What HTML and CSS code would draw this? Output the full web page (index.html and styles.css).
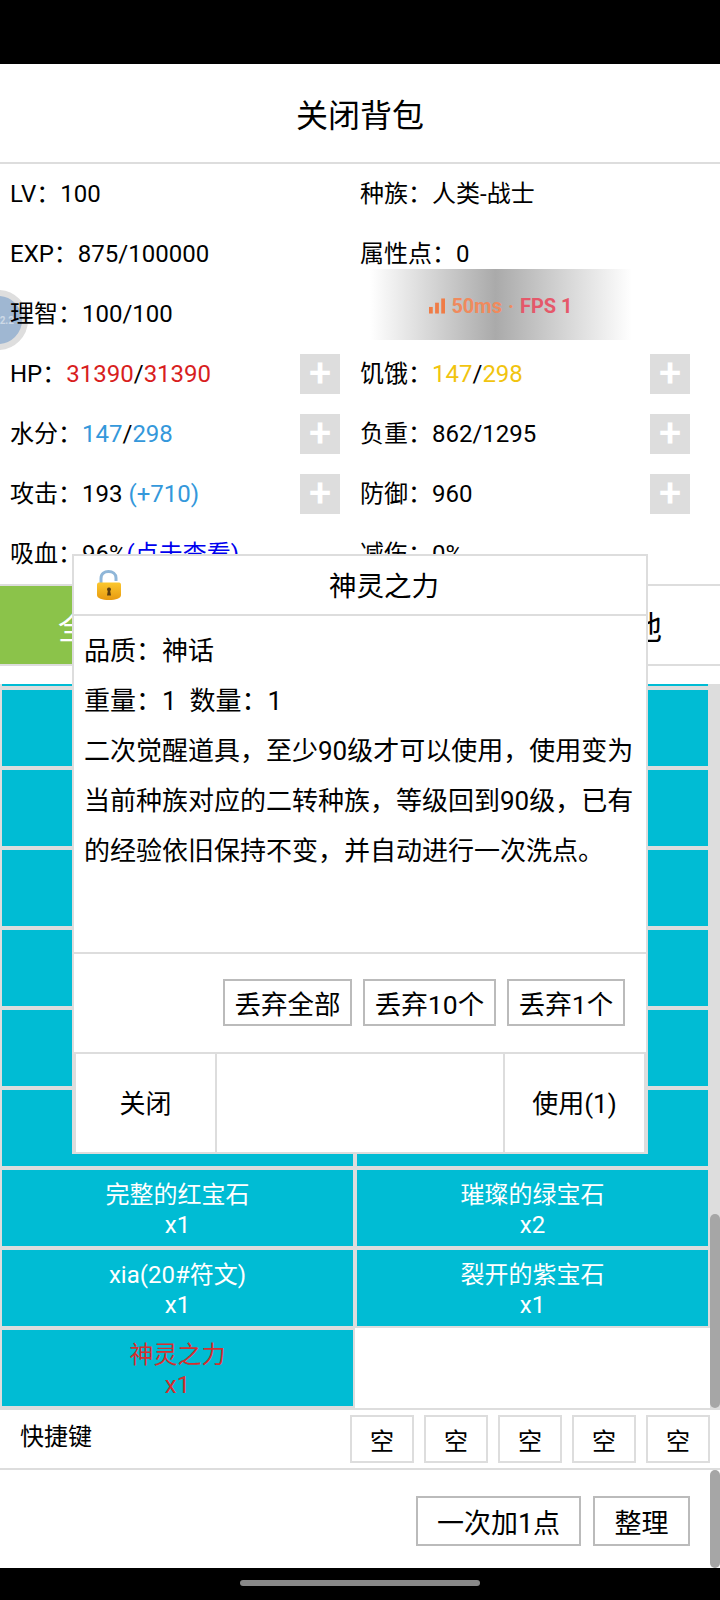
FILE: index.html
```html
<!DOCTYPE html>
<html lang="zh-CN">
<head>
<meta charset="utf-8">
<title>关闭背包</title>
<link rel="stylesheet" href="styles.css">
</head>
<body>
<div class="status-bar"></div>
<div class="float-ball"><span>2.2</span></div>
<main class="app">
  <header class="title">关闭背包</header>
  <section class="stats">
    <div class="stat"><span>LV&#xFF1A;100</span></div>
    <div class="stat"><span>种族&#xFF1A;人类-战士</span></div>
    <div class="stat"><span>EXP&#xFF1A;875/100000</span></div>
    <div class="stat"><span>属性点&#xFF1A;0</span></div>
    <div class="stat"><span>理智&#xFF1A;100/100</span></div>
    <div class="stat"></div>
    <div class="stat"><span>HP&#xFF1A;<i class="red">31390</i>/<i class="red">31390</i></span><b class="plus">+</b></div>
    <div class="stat"><span>饥饿&#xFF1A;<i class="yellow">147</i>/<i class="yellow">298</i></span><b class="plus">+</b></div>
    <div class="stat"><span>水分&#xFF1A;<i class="blue">147</i>/<i class="blue">298</i></span><b class="plus">+</b></div>
    <div class="stat"><span>负重&#xFF1A;862/1295</span><b class="plus">+</b></div>
    <div class="stat"><span>攻击&#xFF1A;193 <i class="blue">(+710)</i></span><b class="plus">+</b></div>
    <div class="stat"><span>防御&#xFF1A;960</span><b class="plus">+</b></div>
    <div class="stat"><span>吸血&#xFF1A;96%<a class="link">(点击查看)</a></span></div>
    <div class="stat"><span>减伤&#xFF1A;0%</span></div>
  </section>
  <nav class="tabs">
    <div class="tab active">全部</div>
    <div class="tab">装备</div>
    <div class="tab">材料</div>
    <div class="tab">其他</div>
  </nav>
  <section class="list-wrap">
    <div class="list">
      <div class="cell sliver"></div><div class="cell sliver"></div>
      <div class="cell"></div><div class="cell"></div>
      <div class="cell"></div><div class="cell"></div>
      <div class="cell"></div><div class="cell"></div>
      <div class="cell"></div><div class="cell"></div>
      <div class="cell"></div><div class="cell"></div>
      <div class="cell"></div><div class="cell"></div>
      <div class="cell">完整的红宝石<br>x1</div><div class="cell">璀璨的绿宝石<br>x2</div>
      <div class="cell">xia(20#符文)<br>x1</div><div class="cell">裂开的紫宝石<br>x1</div>
      <div class="cell mythic">神灵之力<br>x1</div>
    </div>
    <div class="track"><div class="thumb thumb-list"></div></div>
  </section>
  <section class="shortcuts">
    <div class="shortcut-label">快捷键</div>
    <div class="slots">
      <div class="slot">空</div><div class="slot">空</div><div class="slot">空</div><div class="slot">空</div><div class="slot">空</div>
    </div>
  </section>
  <section class="actions">
    <button class="action">一次加1点</button>
    <button class="action action-sort">整理</button>
    <div class="track track-actions"><div class="thumb"></div></div>
  </section>
</main>
<div class="nav-bar"><div class="handle"></div></div>

<div class="net">
  <svg class="net-icon" viewBox="0 0 17 16" width="16" height="16"><rect x="0" y="9" width="4" height="7"/><rect x="6.500" y="4.500" width="4" height="11.500"/><rect x="13" y="0" width="4" height="16"/></svg>
  <span class="ms">50ms</span><span class="dot">·</span><span class="fps">FPS 1</span>
</div>

<div class="modal">
  <div class="modal-head">
    <svg class="lock" viewBox="0 0 26 31" width="26" height="31">
      <defs>
        <linearGradient id="body" x1="0" y1="0" x2="0" y2="1"><stop offset="0" stop-color="#fbc72d"/><stop offset="1" stop-color="#e89a10"/></linearGradient>
      </defs>
      <path d="M5 14V8.500C5 3.500 8.500 1.500 12.500 1.500S20 3.500 20 8V11" fill="none" stroke="#8fb6d8" stroke-width="3"/>
      <path d="M1 15C1 13 2 12.500 4 12.500H22C24 12.500 25 13 25 15V25C25 28.500 20 30 13 30S1 28.500 1 25Z" fill="url(#body)"/>
      <path d="M13 17.500a2 2 0 0 1 1.200 3.600L15 25.500H11L11.800 21.100A2 2 0 0 1 13 17.500Z" fill="#5a3d10"/>
    </svg>
    <div class="modal-title">神灵之力</div>
  </div>
  <div class="modal-body">
    <p>品质&#xFF1A;神话</p>
    <p>重量&#xFF1A;1&nbsp;&nbsp;数量&#xFF1A;1</p>
    <p>二次觉醒道具&#xFF0C;至少90级才可以使用&#xFF0C;使用变为当前种族对应的二转种族&#xFF0C;等级回到90级&#xFF0C;已有的经验依旧保持不变&#xFF0C;并自动进行一次洗点。</p>
  </div>
  <div class="modal-drop">
    <button class="drop">丢弃全部</button>
    <button class="drop">丢弃10个</button>
    <button class="drop">丢弃1个</button>
  </div>
  <div class="modal-foot">
    <div class="foot-btn foot-close">关闭</div>
    <div class="foot-btn foot-mid"></div>
    <div class="foot-btn foot-use">使用(1)</div>
  </div>
</div>
</body>
</html>
```
FILE: styles.css
```css
* { box-sizing: border-box; }
html, body { margin: 0; padding: 0; }
body {
  width: 720px;
  height: 1600px;
  overflow: hidden;
  position: relative;
  background: #fff;
  color: #000;
  font-family: Roboto, "Noto Sans CJK SC", sans-serif;
  font-size: 24px;
}
i { font-style: normal; }
.status-bar { height: 64px; background: #000; }
.app { height: 1504px; display: flex; flex-direction: column; position: relative; }
.title {
  height: 100px;
  border-bottom: 2px solid #ddd;
  font-size: 32px;
  display: flex;
  align-items: center;
  justify-content: center;
}
.stats {
  height: 420px;
  display: grid;
  grid-template-columns: 350px 370px;
  grid-auto-rows: 60px;
}
.stat {
  display: flex;
  align-items: center;
  justify-content: space-between;
  padding-left: 10px;
  line-height: 30px;
  white-space: nowrap;
}
.red { color: #d81e1e; }
.yellow { color: #f1c40f; }
.blue { color: #3498db; }
.link { color: #0000ee; text-decoration: underline; }
.plus {
  width: 40px;
  height: 40px;
  background: #ddd;
  color: #fff;
  font-size: 40px;
  font-weight: 500;
  line-height: 40px;
  text-align: center;
}
.stat:nth-child(odd) .plus { margin-right: 10px; }
.stat:nth-child(even) .plus { margin-right: 30px; }
.tabs {
  height: 82px;
  border-top: 2px solid #ddd;
  border-bottom: 2px solid #ddd;
  display: grid;
  grid-template-columns: repeat(4, 1fr);
}
.tab { display: flex; align-items: center; justify-content: center; font-size: 32px; }
.tab.active { background: #8bc34a; color: #fff; }
.list-wrap {
  margin-top: 18px;
  height: 724px;
  display: flex;
  overflow: hidden;
}
.list {
  width: 710px;
  display: grid;
  grid-template-columns: 355px 355px;
  grid-auto-rows: 80px;
  grid-template-rows: 4px;
  align-content: start;
}
.cell {
  background: #00bcd4;
  border: 2px solid #ddd;
  color: #fff;
  line-height: 30px;
  text-align: center;
  display: flex;
  align-items: center;
  justify-content: center;
  padding-top: 4px;
}
.cell.sliver { border-top: 0; padding: 0; }
.cell.mythic { color: #d32f2f; }
.track {
  width: 10px;
  background: #ddd;
  display: flex;
  flex-direction: column;
  justify-content: flex-end;
}
.thumb { height: 194px; background: #a6a6a6; border-radius: 5px; }
.shortcuts {
  height: 62px;
  border-top: 2px solid #ddd;
  border-bottom: 2px solid #ddd;
  display: flex;
  justify-content: space-between;
  padding: 5px 10px 0 20px;
}
.shortcut-label { line-height: 44px; }
.slots { display: flex; gap: 10px; }
.slot {
  width: 64px;
  height: 48px;
  border: 2px solid #ddd;
  display: flex;
  align-items: center;
  justify-content: center;
}
.actions {
  flex: 1;
  position: relative;
  display: flex;
  justify-content: flex-end;
  align-items: flex-start;
  gap: 12px;
  padding: 26px 30px 0 0;
}
button { font-family: inherit; color: #000; background: #fff; padding: 0; }
.action {
  height: 50px;
  width: 165px;
  border: 2px solid #bbb;
  font-size: 27px;
}
.action-sort { width: 97px; }
.track-actions {
  position: absolute;
  right: 0;
  top: 0;
  bottom: 0;
  background: transparent;
}
.track-actions .thumb { height: 100%; }
.nav-bar {
  height: 32px;
  background: #000;
  display: flex;
  justify-content: center;
  padding-top: 12px;
}
.handle { width: 240px; height: 6px; border-radius: 3px; background: #888; }

.float-ball {
  position: absolute;
  left: -32px;
  top: 290px;
  width: 60px;
  height: 60px;
  border-radius: 50%;
  background: #9fb7d2;
  border: 6px solid #dedede;
  display: flex;
  align-items: center;
  justify-content: flex-end;
  color: #cdd9e6;
  font-size: 10px;
  font-weight: 700;
  padding-right: 8px;
}
.net {
  position: absolute;
  left: 370px;
  top: 269px;
  width: 262px;
  height: 71px;
  background: linear-gradient(90deg, rgba(170,170,170,0) 0%, #aaa 48%, rgba(170,170,170,0) 100%);
  display: flex;
  align-items: center;
  justify-content: center;
  gap: 6px;
  font-size: 20px;
  font-weight: 700;
  padding-top: 3px;
}
.net-icon { fill: #f07c46; }
.ms { color: #f08a5d; }
.dot { color: #f08a5d; }
.fps { color: #e5586a; }

.modal {
  position: absolute;
  left: 72px;
  top: 554px;
  width: 576px;
  height: 600px;
  background: #fff;
  border: 2px solid #ddd;
  display: flex;
  flex-direction: column;
}
.modal-head {
  height: 60px;
  border-bottom: 2px solid #ddd;
  display: flex;
  align-items: center;
  padding-left: 22px;
}
.lock { flex: none; }
.modal-title { flex: 1; text-align: center; font-size: 27.500px; padding-bottom: 2px; }
.modal-body {
  height: 338px;
  border-bottom: 2px solid #ddd;
  padding: 10px 10px 0;
  font-size: 26px;
  line-height: 50px;
}
.modal-body p { margin: 0; }
.modal-drop {
  height: 98px;
  display: flex;
  justify-content: flex-end;
  gap: 11px;
  padding: 25px 21px 0 0;
}
.drop {
  height: 47px;
  width: 129px;
  border: 2px solid #bbb;
  font-size: 26.500px;
}
.drop:nth-child(2) { width: 133px; }
.drop:nth-child(3) { width: 118px; }
.modal-foot {
  flex: 1;
  display: flex;
  border: 2px solid #ddd;
  border-bottom: 0;
  font-size: 26px;
}
.foot-btn { display: flex; align-items: center; justify-content: center; padding-bottom: 3px; }
.foot-close { width: 141px; border-right: 2px solid #ddd; }
.foot-mid { flex: 1; border-right: 2px solid #ddd; }
.foot-use { width: 139px; }
```
